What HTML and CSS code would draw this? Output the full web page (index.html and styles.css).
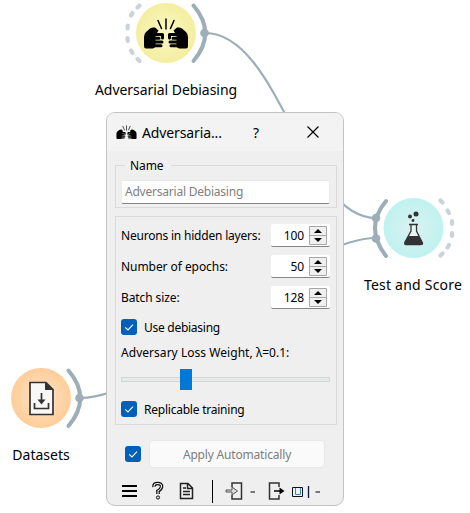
FILE: index.html
```html
<!DOCTYPE html>
<html lang="en">
<head>
<meta charset="utf-8">
<title>Adversarial Debiasing</title>
<link rel="stylesheet" href="styles.css">
</head>
<body>
<main class="canvas">
  <svg class="scene" width="470" height="513" viewBox="0 0 470 513">
    <defs>
      <radialGradient id="yellow"><stop offset="0" stop-color="#fbf8c6"/><stop offset="1" stop-color="#f3ee9f"/></radialGradient>
      <radialGradient id="cyan"><stop offset="0" stop-color="#dbf1f1"/><stop offset="1" stop-color="#bff2ef"/></radialGradient>
      <radialGradient id="orange"><stop offset="0" stop-color="#ffe5ca"/><stop offset="1" stop-color="#ffcd98"/></radialGradient>
      <symbol id="fists" viewBox="0 0 46 32">
        <g id="fist">
          <path d="M3 30.500Q1 30.500 1 28V19Q1 16 3 14L7 10.500Q9 9 12 9.500L15.500 12.500L14 15L12.500 18V29L10 30.500Z"/>
          <path class="finger" d="M12 16.500H19.500M11 20.300H16M11 24H19M11 27.700H18M19.500 16.500V20"/>
        </g>
        <use href="#fist" transform="matrix(-1 0 0 1 46 0)"/>
        <path class="spark" d="M23 1V11M15 2.500L18.500 10.500M31 2.500L27.500 10.500"/>
      </symbol>
    </defs>
    <g class="link">
      <path d="M205 33C280 33 303 218 376 218"/>
      <path d="M80 398C165 398 291 238 376 238"/>
    </g>
    <circle cx="166" cy="33" r="30" fill="url(#yellow)"/>
    <circle cx="413.5" cy="228" r="30" fill="url(#cyan)"/>
    <circle cx="41" cy="398" r="30" fill="url(#orange)"/>
    <g class="anchor">
      <path d="M193.500 5.500Q217 33 193.500 61"/>
      <path d="M386 201Q364 228 386 256"/>
      <path d="M68.500 370.500Q92 398 68.500 426"/>
    </g>
    <g class="anchor-open">
      <path d="M139.500 5.500L137.500 7.500M132.500 13L131 15.500M127.800 25.500L127.500 28.500M127.500 38L127.800 41M131 50.500L132.500 53M137.500 59L139.500 61"/>
      <path d="M440.500 200.500L442.500 202.500M447.500 210.500L449 213M452 221V224M452 233V236M449 245L447.500 247.500M442.500 253.500L440.500 255.500"/>
    </g>
    <g class="dots">
      <circle cx="204.500" cy="33" r="4.300"/><circle cx="376" cy="218" r="4.300"/><circle cx="376" cy="238.500" r="4.300"/><circle cx="79.500" cy="398" r="4.300"/>
    </g>
    <use href="#fists" x="143" y="18" width="46" height="32"/>
    <g fill="#333">
      <circle cx="416" cy="214" r="2.500"/><circle cx="410" cy="216.500" r="2"/><circle cx="413" cy="220.500" r="1.400"/>
      <path d="M409 224.500H418M411 225V231L405 242Q404 244.500 406 244.500H421Q423.500 244.500 422 242L416.500 231V225" fill="#e9f5f5" stroke="#333" stroke-width="1.300"/>
      <path d="M408.500 236H418.500L422.500 242Q423.500 245 421 245H406Q403.500 245 405 242Z"/>
    </g>
    <path d="M30 382.500H46L53 389.500V414.500H30Z" fill="#f8f8f6" stroke="#333" stroke-width="1.700"/>
    <path d="M45 382L53.500 390H45Z" fill="#333"/>
    <path d="M41.500 393V401M34.500 403V408.500H48.500V403" fill="none" stroke="#333" stroke-width="1.700"/>
    <path d="M37.500 399.500H45.500L41.500 404.500Z" fill="#333"/>
  </svg>
  <div class="node-label node-adv"><span>Adversarial Debiasing</span></div>
  <div class="node-label node-test"><span>Test and Score</span></div>
  <div class="node-label node-data"><span>Datasets</span></div>

  <section class="dialog">
    <header class="titlebar">
      <svg class="title-icon" width="21" height="15" viewBox="0 0 46 32"><use href="#fists" width="46" height="32"/></svg>
      <span class="title">Adversaria...</span>
      <span class="help">?</span>
      <svg class="close" width="12" height="12" viewBox="0 0 12 12"><path d="M.5.5L11.500 11.500M11.500.5L.5 11.500"/></svg>
    </header>
    <div class="group name-group">
      <div class="legend">Name</div>
      <div class="field">Adversarial Debiasing</div>
    </div>
    <div class="group params">
      <div class="row"><span class="neurons">Neurons in hidden layers:</span><div class="spin"><span>100</span><svg width="18" height="19" viewBox="0 0 18 19"><use href="#steps"/></svg></div></div>
      <div class="row"><span class="epochs">Number of epochs:</span><div class="spin"><span>50</span><svg width="18" height="19" viewBox="0 0 18 19"><use href="#steps"/></svg></div></div>
      <div class="row"><span class="batch">Batch size:</span><div class="spin"><span>128</span><svg width="18" height="19" viewBox="0 0 18 19">
        <g id="steps"><path d="M.5.5H17.500V18.500H.5ZM.5 9.500H17.500" fill="#f0f0f0" stroke="#a8a8a8"/><path d="M5 7L9 3L13 7ZM5 12H13L9 16Z" fill="#000"/></g></svg></div></div>
      <div class="check"><svg class="box" width="16" height="16" viewBox="0 0 16 16"><path d="M4.200 8.300L7 11L12 5.700"/></svg><span class="debias">Use debiasing</span></div>
      <div class="loss"><span>Adversary Loss Weight, λ=0.1:</span></div>
      <div class="slider"><div class="groove"></div><div class="handle"></div></div>
      <div class="check replicable"><svg class="box" width="16" height="16" viewBox="0 0 16 16"><path d="M4.200 8.300L7 11L12 5.700"/></svg><span>Replicable training</span></div>
    </div>
    <div class="apply">
      <svg class="box" width="16" height="16" viewBox="0 0 16 16"><path d="M4.200 8.300L7 11L12 5.700"/></svg>
      <div class="button"><span>Apply Automatically</span></div>
    </div>
    <footer class="status">
      <svg width="210" height="24" viewBox="0 0 210 24">
        <path d="M1 7H16M1 12H16M1 17H16" stroke="#000" stroke-width="2"/>
        <path d="M33 8Q32.500 4.500 36.500 4.500Q41 4.500 40.500 8Q40 10.500 37 12V15" fill="none" stroke="#111" stroke-width="3.600"/>
        <path d="M33 8Q32.500 4.500 36.500 4.500Q41 4.500 40.500 8Q40 10.500 37 12V15" fill="none" stroke="#eee" stroke-width="1.100"/>
        <circle cx="37" cy="18.500" r="1.600" fill="#ddd" stroke="#111"/>
        <path d="M59.500 4.500H67L71.500 9V19.500H59.500ZM66.500 4.500V9.500H71.500M62 9H65M62 12.500H69M62 15.500H69" fill="none" stroke="#222" stroke-width="1.500"/>
        <path d="M91.500 1V24" stroke="#000"/>
        <path d="M111 8V4H120.500V20H111V16" fill="none" stroke="#333" stroke-width="1.500"/>
        <path d="M105 11H111V8L116.500 12L111 16V13H105Z" fill="#ddd" stroke="#555"/>
        <path d="M158 8V4H148.500V20H158V16" fill="none" stroke="#333" stroke-width="1.500"/>
        <path d="M153 12H160" stroke="#000" stroke-width="1.500"/><path d="M158.500 8.500L163.500 12L158.500 15.500Z"/>
        <path d="M171.500 8.500H181.500V17.500H171.500Z" fill="#edf4f8" stroke="#111"/>
        <path d="M174.500 9V15.500H179.500V9" fill="none" stroke="#3689cc"/>
        <path d="M187.500 7V19" stroke="#10103c" stroke-width="1.300"/>
        <path d="M129.500 13H134M194.500 13H199" stroke="#000" stroke-width="1.200"/>
      </svg>
    </footer>
  </section>
</main>
</body>
</html>
```

FILE: styles.css
```css
* { box-sizing: border-box; }
body { margin: 0; background: #fff; font-family: "Noto Sans", sans-serif; font-size: 12px; color: #000; }
.canvas { position: relative; width: 470px; height: 513px; overflow: hidden; }
.scene { display: block; }
.link path { fill: none; stroke: #9caeb7; stroke-width: 2.2; }
.anchor path { fill: none; stroke: #9caeb7; stroke-width: 4; stroke-linecap: round; }
.anchor-open path { fill: none; stroke: #cad3d7; stroke-width: 4.2; stroke-linecap: round; }
.dots { fill: #9caeb7; }
.finger { fill: none; stroke: #000; stroke-width: 3; stroke-linecap: round; }
.spark { fill: none; stroke: #000; stroke-width: 1.5; stroke-linecap: round; }
.node-label { position: absolute; display: flex; justify-content: center; width: 160px; font-size: 14px; line-height: 20px; white-space: nowrap; }
.node-adv { left: 86px; top: 80px; letter-spacing: -0.05px; }
.node-test { left: 333px; top: 275px; letter-spacing: 0.22px; }
.node-data { left: -39px; top: 445px; }
.dialog { position: absolute; left: 106px; top: 112px; width: 238px; height: 394px; border: 1px solid #c3c3c3; border-radius: 9px; background: #efefef; overflow: hidden; padding: 0 7px 0 8px; }
.titlebar { display: flex; align-items: center; height: 38px; margin: 0 -7px 0 -8px; padding-left: 9px; background: #f3f3f3; font-size: 14px; }
.title { width: 110px; margin-left: 5px; letter-spacing: -0.12px; }
.help { width: 55px; padding-left: 1px; }
.close path { fill: none; stroke: #000; stroke-width: 1.2; }
.group { border: 1px solid #dadada; width: 222px; }
.name-group { height: 43px; margin-top: 14px; padding: 0 6px; }
.legend { width: 46px; height: 15px; margin-left: 3px; margin-top: -8px; padding-left: 5px; line-height: 15px; background: #efefef; letter-spacing: -0.1px; }
.field { height: 24px; margin-top: 7px; margin-left: -1px; padding-left: 3px; line-height: 22px; width: 209px; background: #fff; border: 1px solid #eaeaea; border-bottom-color: #858585; border-radius: 2px; color: #808080; letter-spacing: -0.22px; }
.params { height: 209px; margin-top: 8px; padding: 6px 6px 0 5px; }
.row { display: flex; align-items: center; justify-content: space-between; height: 31px; padding-bottom: 6px; white-space: nowrap; }
.neurons { letter-spacing: -0.2px; }
.epochs { letter-spacing: -0.06px; }
.batch { letter-spacing: -0.1px; }
.spin { display: flex; justify-content: flex-end; align-items: center; gap: 5px; width: 59px; height: 23px; margin-top: 6px; margin-bottom: 6px; padding-right: 2px; background: #fff; border-bottom: 1px solid #858585; border-radius: 2px; }
.spin span { letter-spacing: -0.15px; }
.spin svg { margin-right: 1px; }
.check { display: flex; align-items: center; gap: 7px; height: 16px; margin-top: 3px; }
.debias { letter-spacing: -0.27px; }
.replicable span { letter-spacing: -0.23px; }
.box { flex: none; background: #005fb8; border-radius: 3px; }
.box path { fill: none; stroke: #fff; stroke-width: 1.1; }
.loss { height: 18px; margin-top: 9px; line-height: 18px; white-space: nowrap; letter-spacing: 0.04px; }
.slider { display: grid; align-items: center; height: 21px; margin-top: 7px; }
.groove, .handle { grid-area: 1 / 1; }
.groove { height: 5px; width: 209px; border: 1px solid #d5d7d5; background: #e7eaea; }
.handle { width: 12px; height: 21px; margin-left: 59px; background: #0078d7; }
.replicable { margin-top: 11px; }
.apply { display: flex; align-items: center; gap: 8px; height: 28px; margin: 15px 0 0 10px; }
.button { display: flex; align-items: center; justify-content: center; width: 176px; height: 28px; border: 1px solid #e7e7e7; border-radius: 4px; background: #fafafa; color: #7d7d7d; letter-spacing: -0.18px; }
.status { display: flex; height: 24px; margin: 11px 0 0 6px; }
```
